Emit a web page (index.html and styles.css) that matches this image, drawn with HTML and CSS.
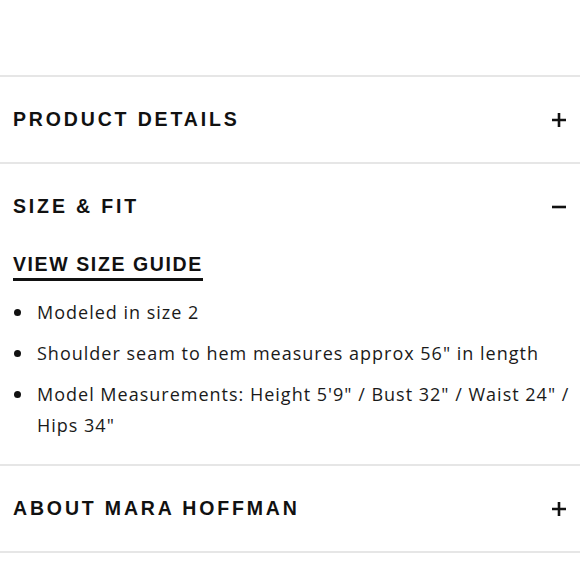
FILE: index.html
```html
<!DOCTYPE html>
<html>
<head>
<meta charset="utf-8">
<link rel="stylesheet" href="styles.css">
</head>
<body>
<div class="page">
  <div class="top-space"></div>
  <section class="panel">
    <div class="panel-head">
      <h2 class="panel-title">PRODUCT DETAILS</h2>
      <svg class="icon" width="14" height="14" viewBox="0 0 14 14"><path d="M7 0V14M0 7H14" stroke="#111" stroke-width="2.6"/></svg>
    </div>
  </section>
  <section class="panel">
    <div class="panel-head">
      <h2 class="panel-title">SIZE &amp; FIT</h2>
      <svg class="icon" width="14" height="14" viewBox="0 0 14 14"><path d="M0 7H14" stroke="#111" stroke-width="2.6"/></svg>
    </div>
    <div class="panel-body">
      <a class="guide-link">VIEW SIZE GUIDE</a>
      <ul class="specs">
        <li>Modeled in size 2</li>
        <li>Shoulder seam to hem measures approx 56" in length</li>
        <li>Model Measurements: Height 5'9" / Bust 32" / Waist 24" / Hips 34"</li>
      </ul>
    </div>
  </section>
  <section class="panel panel-last">
    <div class="panel-head">
      <h2 class="panel-title">ABOUT MARA HOFFMAN</h2>
      <svg class="icon" width="14" height="14" viewBox="0 0 14 14"><path d="M7 0V14M0 7H14" stroke="#111" stroke-width="2.6"/></svg>
    </div>
  </section>
</div>
</body>
</html>
```

FILE: styles.css
```css
* { box-sizing: border-box; }
html, body { margin: 0; padding: 0; background: #fff; }
body { font-family: "Open Sans", "Liberation Sans", sans-serif; color: #1a1a1a; }
.page { width: 580px; }
.top-space { height: 75px; }
.panel { border-top: 2px solid #e6e6e6; }
.panel-last { border-bottom: 2px solid #e6e6e6; }
.panel-head {
  height: 85px;
  display: flex;
  align-items: center;
  justify-content: space-between;
  padding: 0 14px 0 13px;
}
.panel-title {
  margin: 0;
  font-family: "Liberation Sans", sans-serif;
  font-weight: 700;
  font-size: 19.5px;
  letter-spacing: 2.85px;
  color: #111;
}
.icon { display: block; }
.panel-body { padding: 0 6px 23px 13px; margin-top: 3px; }
.guide-link {
  display: inline-block;
  font-family: "Liberation Sans", sans-serif;
  font-weight: 700;
  font-size: 19.5px;
  letter-spacing: 1.6px;
  color: #111;
  padding-bottom: 2px;
  border-bottom: 3px solid #111;
  line-height: 24px;
}
.specs {
  list-style: none;
  margin: 16px 0 0 0;
  padding: 0;
  font-size: 18px;
  line-height: 31px;
  letter-spacing: 1px;
  color: #1a1a1a;
}
.specs li {
  position: relative;
  padding-left: 24px;
  margin-bottom: 10px;
}
.specs li:last-child { margin-bottom: 0; }
.specs li::before {
  content: "";
  position: absolute;
  left: 1px;
  top: 12px;
  width: 7px;
  height: 7px;
  border-radius: 50%;
  background: #111;
}
```
